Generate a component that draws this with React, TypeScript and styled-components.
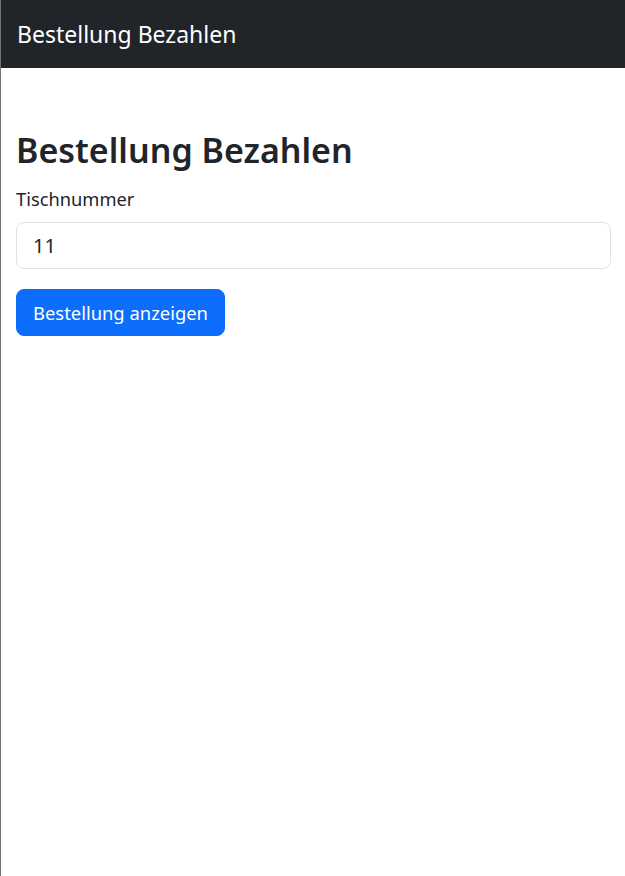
import React from "react";
import styled, { createGlobalStyle } from "styled-components";

const GlobalStyle = createGlobalStyle`
  html, body {
    margin: 0;
    padding: 0;
    background: #fff;
  }
  body {
    font-family: "Noto Sans", "Open Sans", sans-serif;
    color: #212529;
    border-left: 1px solid #6f7378;
    min-height: 876px;
    box-sizing: border-box;
  }
  * {
    box-sizing: border-box;
  }
`;

const Navbar = styled.nav`
  height: 68px;
  background-color: #212529;
  display: flex;
  align-items: center;
  padding: 0 16px;
`;

const Brand = styled.span`
  color: #fff;
  font-size: 23px;
  line-height: 1.5;
`;

const Container = styled.main`
  padding: 62px 14px 0 15px;
  display: flex;
  flex-direction: column;
`;

const Title = styled.h1`
  margin: 0 0 14px;
  font-size: 34px;
  font-weight: 600;
  line-height: 1.2;
`;

const Label = styled.label`
  font-size: 18.3px;
  line-height: 1.5;
  margin-bottom: 10px;
`;

const Input = styled.input`
  display: block;
  width: 100%;
  height: 47px;
  padding: 8px 16px;
  font-family: inherit;
  font-size: 20px;
  color: #212529;
  border: 1px solid #dee2e6;
  border-radius: 8px;
  margin-bottom: 20px;
  outline: none;
`;

const Button = styled.button`
  align-self: flex-start;
  height: 47px;
  padding: 0 16px;
  font-family: inherit;
  font-size: 18.4px;
  color: #fff;
  background-color: #0d6efd;
  border: 1px solid #0d6efd;
  border-radius: 8px;
  cursor: pointer;
`;

export default function App() {
  return (
    <>
      <GlobalStyle />
      <Navbar>
        <Brand>Bestellung Bezahlen</Brand>
      </Navbar>
      <Container>
        <Title>Bestellung Bezahlen</Title>
        <Label htmlFor="tisch">Tischnummer</Label>
        <Input id="tisch" type="text" defaultValue="11" />
        <Button type="button">Bestellung anzeigen</Button>
      </Container>
    </>
  );
}
